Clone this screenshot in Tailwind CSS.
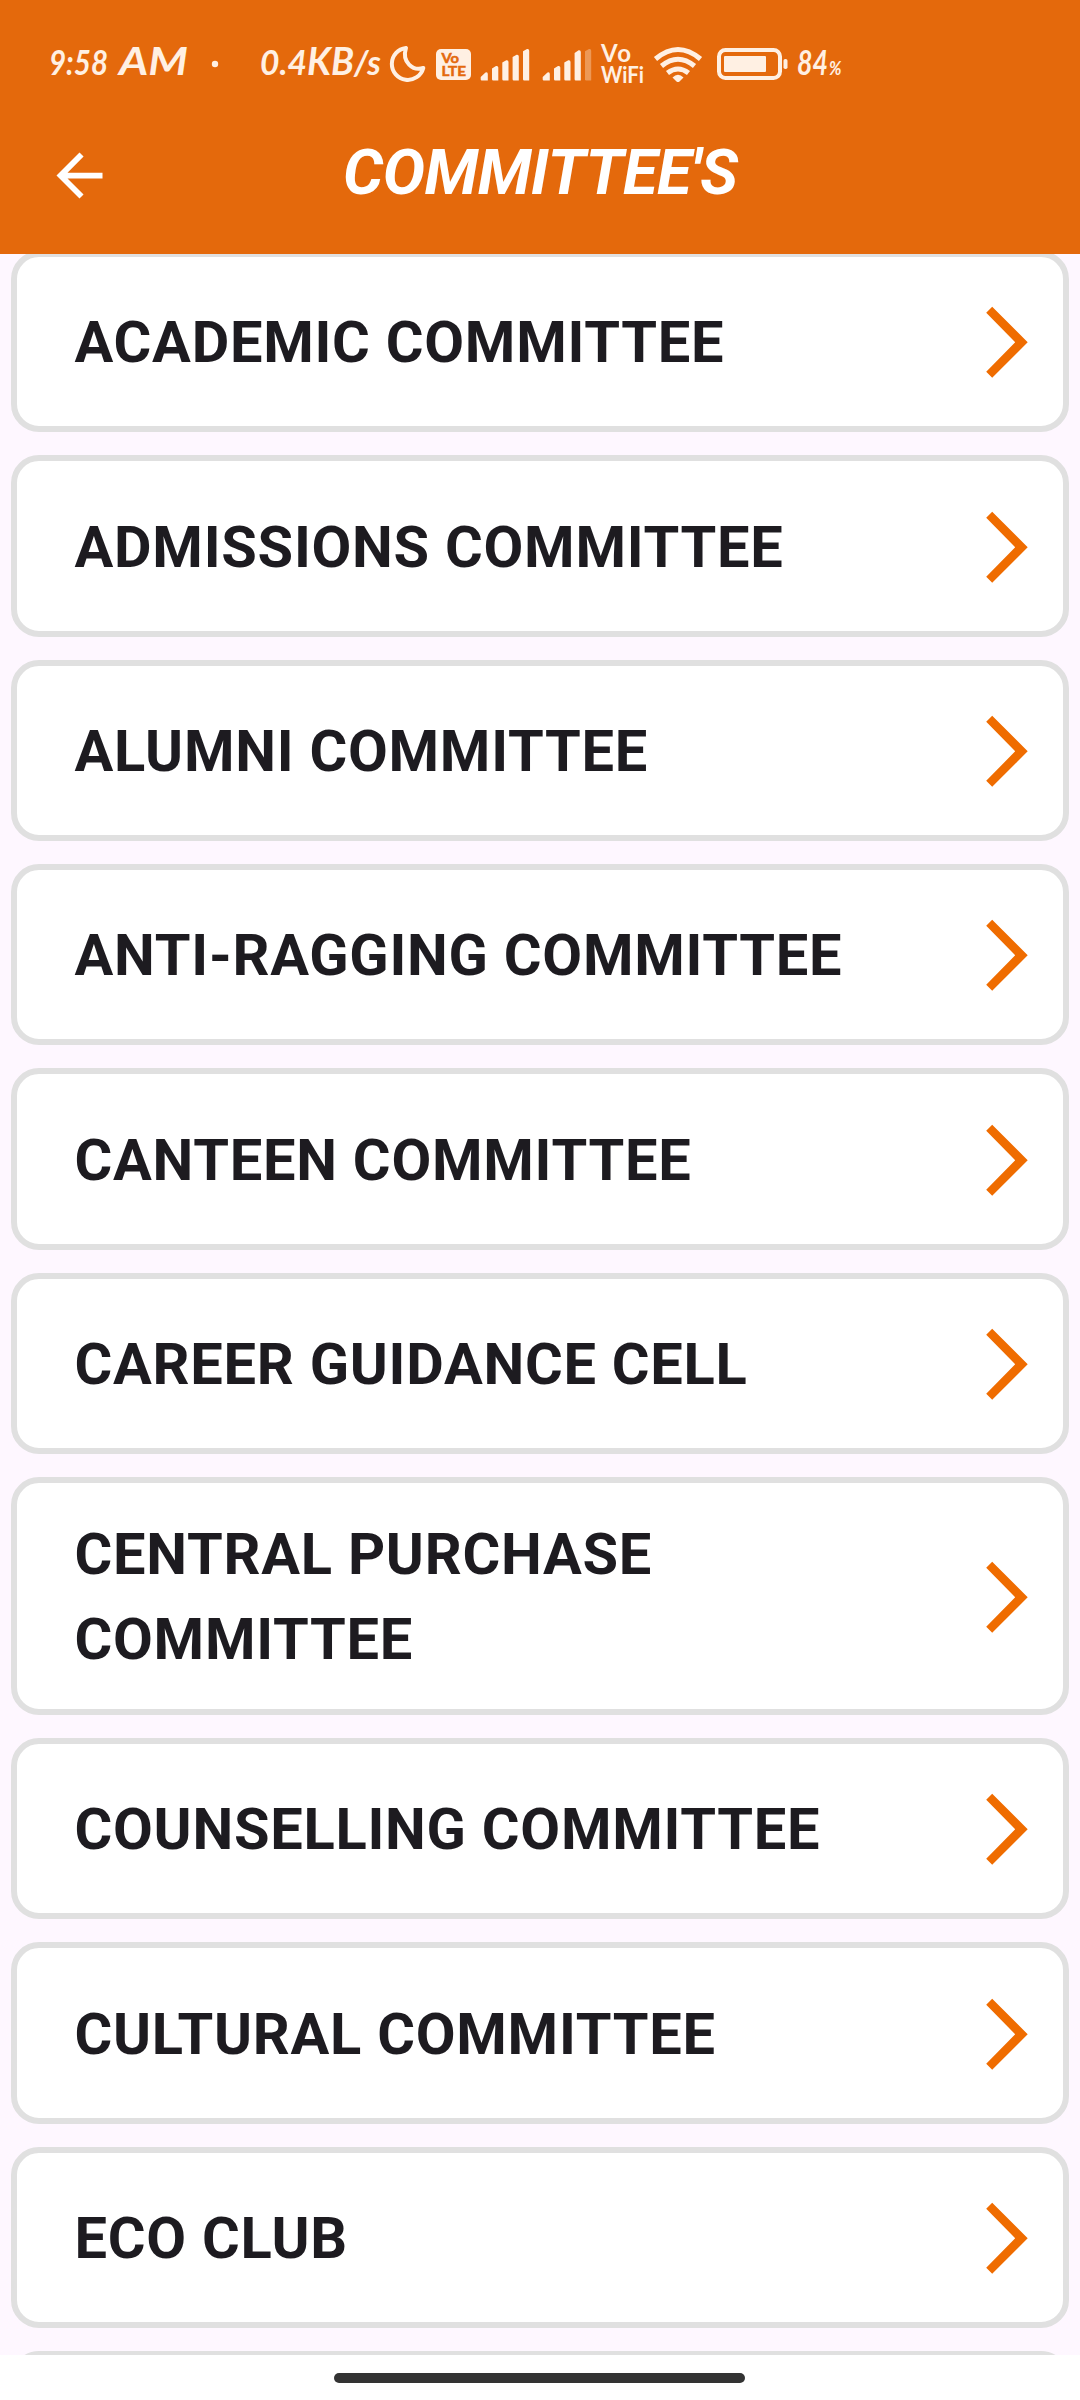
<!DOCTYPE html>
<html lang="en">
<head>
<meta charset="utf-8">
<title>Committee's</title>
<script src="https://cdn.jsdelivr.net/npm/@tailwindcss/browser@4"></script>
</head>
<body class="flex h-[2400px] w-[1080px] flex-col overflow-hidden bg-white font-['Roboto',sans-serif]">
<header class="flex h-[254px] shrink-0 flex-col bg-[#e4690c]">
  <div class="flex h-[128px] items-start pt-10 pl-12 text-[#fff0e3]">
    <svg class="h-12 w-[172px] overflow-visible" viewBox="48 40 172 48" fill="currentColor" font-family="Lato, sans-serif" font-style="italic" font-weight="700" font-size="34">
      <text x="49" y="75" textLength="59" lengthAdjust="spacingAndGlyphs">9:58</text>
      <text x="119" y="75" font-size="38" textLength="69" lengthAdjust="spacingAndGlyphs">AM</text>
      <circle cx="215" cy="64" r="3.2"/>
    </svg>
    <svg class="ml-10 h-12 w-[124px] overflow-visible" viewBox="260 40 124 48" fill="currentColor" font-family="Lato, sans-serif" font-style="italic" font-weight="700" font-size="34">
      <text x="260" y="75" textLength="121" lengthAdjust="spacingAndGlyphs">0.4<tspan font-size="38">KB</tspan>/s</text>
    </svg>
    <svg class="ml-1 h-12 w-10" viewBox="388 40 40 48" fill="none" stroke="currentColor" stroke-width="4" stroke-linejoin="round">
      <path d="M406 48A16 16 0 1 0 423.300 68C413 71.500 401.500 62 406 48Z"/>
    </svg>
    <svg class="ml-2 h-12 w-9" viewBox="436 40 36 48" font-family="Lato, sans-serif" font-weight="700">
      <rect x="436" y="49" width="35" height="31" rx="5" fill="currentColor"/>
      <g fill="#e4690c" stroke="#e4690c" stroke-width=".5"><text x="441.500" y="62.500" font-size="12.500" textLength="17.500" lengthAdjust="spacingAndGlyphs">Vo</text><text x="441.500" y="76" font-size="14" textLength="24.500" lengthAdjust="spacingAndGlyphs">LTE</text></g>
    </svg>
    <svg class="ml-2 h-12 w-[50px]" viewBox="480 40 50 48" fill="currentColor">
      <path d="M480.700 77l4.800-4.500q2.300-.8 2.300 1.500v6.500h-6q-1.100 0-1.100-1zM492 68.500l4-2.500q2.300-.5 2.300 1.500v13h-5q-1.300 0-1.300-1.200zM502.300 62.500l4-2.200q2.200-.4 2.200 1.600v18.600h-5q-1.200 0-1.200-1.200zM512.600 57l4-2.200q2.200-.4 2.200 1.600v24.100h-5q-1.200 0-1.200-1.200zM523 51.300l4-2.200q2.200-.4 2.200 1.600v29.800h-5q-1.200 0-1.200-1.200z"/>
    </svg>
    <svg class="ml-3 h-12 w-[50px]" viewBox="480 40 50 48" fill="currentColor">
      <path d="M480.700 77l4.800-4.500q2.300-.8 2.300 1.500v6.500h-6q-1.100 0-1.100-1zM492 68.500l4-2.500q2.300-.5 2.300 1.500v13h-5q-1.300 0-1.300-1.200zM502.300 62.500l4-2.200q2.200-.4 2.200 1.600v18.600h-5q-1.200 0-1.200-1.200zM512.600 53l4-2.700q2.200-.4 2.200 1.600v28.600h-5q-1.200 0-1.200-1.200z"/>
      <path opacity=".35" d="M523 51.300l4-2.200q2.200-.4 2.200 1.600v29.800h-5q-1.200 0-1.200-1.200z"/>
    </svg>
    <svg class="ml-2 h-12 w-[46px] overflow-visible" viewBox="600 40 46 48" fill="currentColor" font-family="Lato, sans-serif" font-weight="700">
      <text x="601" y="61.500" font-size="24" textLength="30">Vo</text>
      <text x="601" y="83" font-size="22" textLength="43" lengthAdjust="spacingAndGlyphs">WiFi</text>
    </svg>
    <svg class="ml-1.5 h-12 w-[52px]" viewBox="652 40 52 48" fill="none" stroke="currentColor" stroke-width="5">
      <path d="M655.500 59Q678 40 700.500 59M661.500 66Q678 52.500 694.500 66M667.500 73Q678 65 688.500 73"/>
      <path d="M672.500 77.500Q678 72 683.500 77.500L679.500 81.500Q678 82.500 676.500 81.500Z" fill="currentColor" stroke="none"/>
    </svg>
    <svg class="ml-3 h-12 w-[74px]" viewBox="716 40 74 48" fill="currentColor">
      <rect x="719" y="50" width="61" height="28" rx="6.500" fill="none" stroke="currentColor" stroke-width="4"/>
      <rect x="724" y="56" width="42" height="16" rx="1"/>
      <rect x="783.500" y="59" width="4" height="10" rx="1.800"/>
    </svg>
    <svg class="ml-1.5 h-12 w-[48px] overflow-visible" viewBox="796 40 48 48" fill="currentColor" font-family="Lato, sans-serif" font-style="italic" font-weight="700">
      <text x="797" y="75" font-size="34" textLength="31" lengthAdjust="spacingAndGlyphs">84</text>
      <text x="829" y="75" font-size="18" textLength="12.500" lengthAdjust="spacingAndGlyphs">%</text>
    </svg>
  </div>
  <div class="flex h-[94px] items-center text-white">
    <svg class="ml-[45px] size-[69px]" viewBox="0 0 24 24" fill="currentColor"><path d="M20 11H7.830l5.590-5.590L12 4l-8 8 8 8 1.410-1.410L7.830 13H20z"/></svg>
    <h1 class="mb-[5px] ml-[229px] text-[63.250px] leading-none font-bold tracking-[-0.500px] italic whitespace-nowrap">COMMITTEE'S</h1>
  </div>
</header>
<main class="h-[2101px] shrink-0 overflow-hidden bg-[#fef7ff]">
  <ul id="committees" class="-mt-[3px] flex flex-col gap-[23px] px-[11px]"></ul>
</main>
<footer class="flex flex-1 pt-[18px] pl-[334px]">
  <div class="h-2.5 w-[411px] rounded-full bg-[#333333]"></div>
</footer>
<template id="card">
  <li class="flex min-h-[181.350px] shrink-0 items-center justify-between rounded-[28px] border-6 border-[#e0e0e0] bg-white pt-[29px] pr-[35px] pb-[27px] pl-[57.500px]">
    <span class="w-[800px] text-[57.750px] leading-[85px] font-bold tracking-[0.750px] text-[#1d1b20]"></span>
    <svg class="-mt-px h-[72px] w-[42px] shrink-0" viewBox="0 0 42 72" fill="#ef6c00"><path d="M6.200.8L41.700 36.300 6.200 71.800.2 65.800 29.200 36.300.2 6.800z"/></svg>
  </li>
</template>
<script>
const names = ["ACADEMIC COMMITTEE", "ADMISSIONS COMMITTEE", "ALUMNI COMMITTEE", "ANTI-RAGGING COMMITTEE", "CANTEEN COMMITTEE", "CAREER GUIDANCE CELL", "CENTRAL PURCHASE COMMITTEE", "COUNSELLING COMMITTEE", "CULTURAL COMMITTEE", "ECO CLUB", ""];
for (const name of names) {
  const card = document.getElementById("card").content.cloneNode(true);
  card.querySelector("span").textContent = name;
  document.getElementById("committees").append(card);
}
</script>
</body>
</html>
